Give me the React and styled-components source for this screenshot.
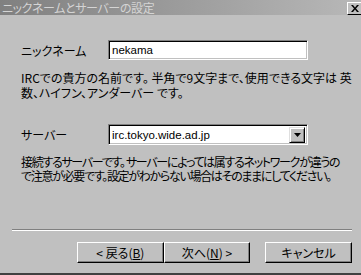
import React from 'react'
import styled, { createGlobalStyle } from 'styled-components'

const Global = createGlobalStyle`
  html, body {
    margin: 0;
    padding: 0;
    background: #c0c0c0;
  }
  body {
    font-family: "Noto Sans CJK JP", "Liberation Sans", sans-serif;
    font-size: 12px;
    font-feature-settings: "palt";
  }
`

function App() {
  return (
    <Window>
      <Global />
      <TitleBar>
        <TitleText>ニックネームとサーバーの設定</TitleText>
        <CloseButton>
          <svg width="8" height="7" viewBox="0 0 8 7">
            <path d="M0 0h2l2 2.5L6 0h2L5 3.5 8 7H6L4 4.5 2 7H0l3-3.5z" fill="#000" />
          </svg>
        </CloseButton>
      </TitleBar>
      <Body>
        <FieldRow>
          <Label>ニックネーム</Label>
          <TextBox>nekama</TextBox>
        </FieldRow>
        <Help top={10}>
          IRCでの貴方の名前です。 半角で9文字まで、使用できる文字は 英<br />
          数、ハイフン、アンダーバー です。
        </Help>
        <FieldRow top={24}>
          <Label>サーバー</Label>
          <Combo>
            <ComboText>irc.tokyo.wide.ad.jp</ComboText>
            <ComboButton>
              <svg width="7" height="4" viewBox="0 0 7 4">
                <path d="M0 0h7L3.5 4z" fill="#000" />
              </svg>
            </ComboButton>
          </Combo>
        </FieldRow>
        <Help top={10} tight>
          接続するサーバーです。 サーバーによっては属するネットワークが違うの<br />
          で注意が必要です。設定がわからない場合はそのままにしてください。
        </Help>
      </Body>
      <Separator />
      <ButtonBar>
        <Button>&lt; 戻る(<u>B</u>)</Button>
        <Button>次へ(<u>N</u>) &gt;</Button>
        <Spacer />
        <Button>キャンセル</Button>
      </ButtonBar>
    </Window>
  )
}

export default App

const Window = styled.div`
  width: 361px;
  height: 275px;
  display: flex;
  flex-direction: column;
  background: #c0c0c0;
  border-bottom: 2px solid #404040;
  box-sizing: border-box;
  overflow: hidden;
`

const TitleBar = styled.div`
  flex-shrink: 0;
  height: 15px;
  display: flex;
  align-items: center;
  justify-content: space-between;
  background: linear-gradient(to right, #808080, #b8b8b8);
  padding-left: 2px;
`

const TitleText = styled.span`
  color: #d4d4d4;
  font-size: 12px;
  letter-spacing: -0.4px;
  line-height: 15px;
  white-space: nowrap;
`

const CloseButton = styled.div`
  width: 16px;
  height: 13px;
  margin-top: 1px;
  margin-right: -2px;
  box-sizing: border-box;
  display: flex;
  align-items: center;
  justify-content: center;
  background: #c0c0c0;
  border-top: 1px solid #fff;
  border-left: 1px solid #fff;
  border-bottom: 1px solid #000;
  border-right: 1px solid #000;
`

const Body = styled.div`
  flex: 1;
  padding: 25px 0 0 21px;
  box-sizing: border-box;
`

const FieldRow = styled.div`
  display: flex;
  align-items: center;
  margin-top: ${p => (p.top || 0)}px;
`

const Label = styled.span`
  width: 87px;
  font-size: 12px;
  color: #000;
`

const sunken = `
  box-sizing: border-box;
  background: #fff;
  border-top: 1px solid #808080;
  border-left: 1px solid #808080;
  border-bottom: 1px solid #fff;
  border-right: 1px solid #fff;
  box-shadow: inset 1px 1px 0 #000, inset -1px -1px 0 #c0c0c0;
`

const TextBox = styled.div`
  ${sunken}
  width: 200px;
  height: 20px;
  padding: 2px 0 0 3px;
  font-family: "Liberation Sans", sans-serif;
  font-size: 11.5px;
  line-height: 15px;
  color: #000;
`

const Help = styled.p`
  margin: ${p => p.top}px 0 0;
  font-size: 12px;
  line-height: ${p => (p.tight ? 14 : 15)}px;
  letter-spacing: ${p => (p.tight ? -1.3 : 0)}px;
  color: #000;
  white-space: nowrap;
`

const Combo = styled.div`
  ${sunken}
  width: 200px;
  height: 21px;
  display: flex;
  align-items: center;
  padding: 2px;
`

const ComboText = styled.span`
  flex: 1;
  padding-left: 1px;
  font-family: "Liberation Sans", sans-serif;
  font-size: 11.5px;
  color: #000;
`

const ComboButton = styled.div`
  width: 16px;
  height: 16px;
  box-sizing: border-box;
  display: flex;
  align-items: center;
  justify-content: center;
  background: #c0c0c0;
  border-top: 1px solid #dfdfdf;
  border-left: 1px solid #dfdfdf;
  border-bottom: 1px solid #000;
  border-right: 1px solid #000;
  box-shadow: inset 1px 1px 0 #fff, inset -1px -1px 0 #808080;
`

const Separator = styled.div`
  flex-shrink: 0;
  margin: 0 9px 0 12px;
  height: 0;
  border-top: 1px solid #808080;
  border-bottom: 1px solid #fff;
`

const ButtonBar = styled.div`
  flex-shrink: 0;
  display: flex;
  padding: 11px 9px 10px 77px;
`

const Spacer = styled.div`
  width: 15px;
`

const Button = styled.div`
  width: 87px;
  height: 21px;
  box-sizing: border-box;
  display: flex;
  align-items: center;
  justify-content: center;
  background: #c0c0c0;
  border-top: 1px solid #fff;
  border-left: 1px solid #fff;
  border-bottom: 1px solid #000;
  border-right: 1px solid #000;
  box-shadow: inset -1px -1px 0 #808080;
  font-size: 12px;
  color: #000;
  u {
    text-decoration: underline;
  }
`
